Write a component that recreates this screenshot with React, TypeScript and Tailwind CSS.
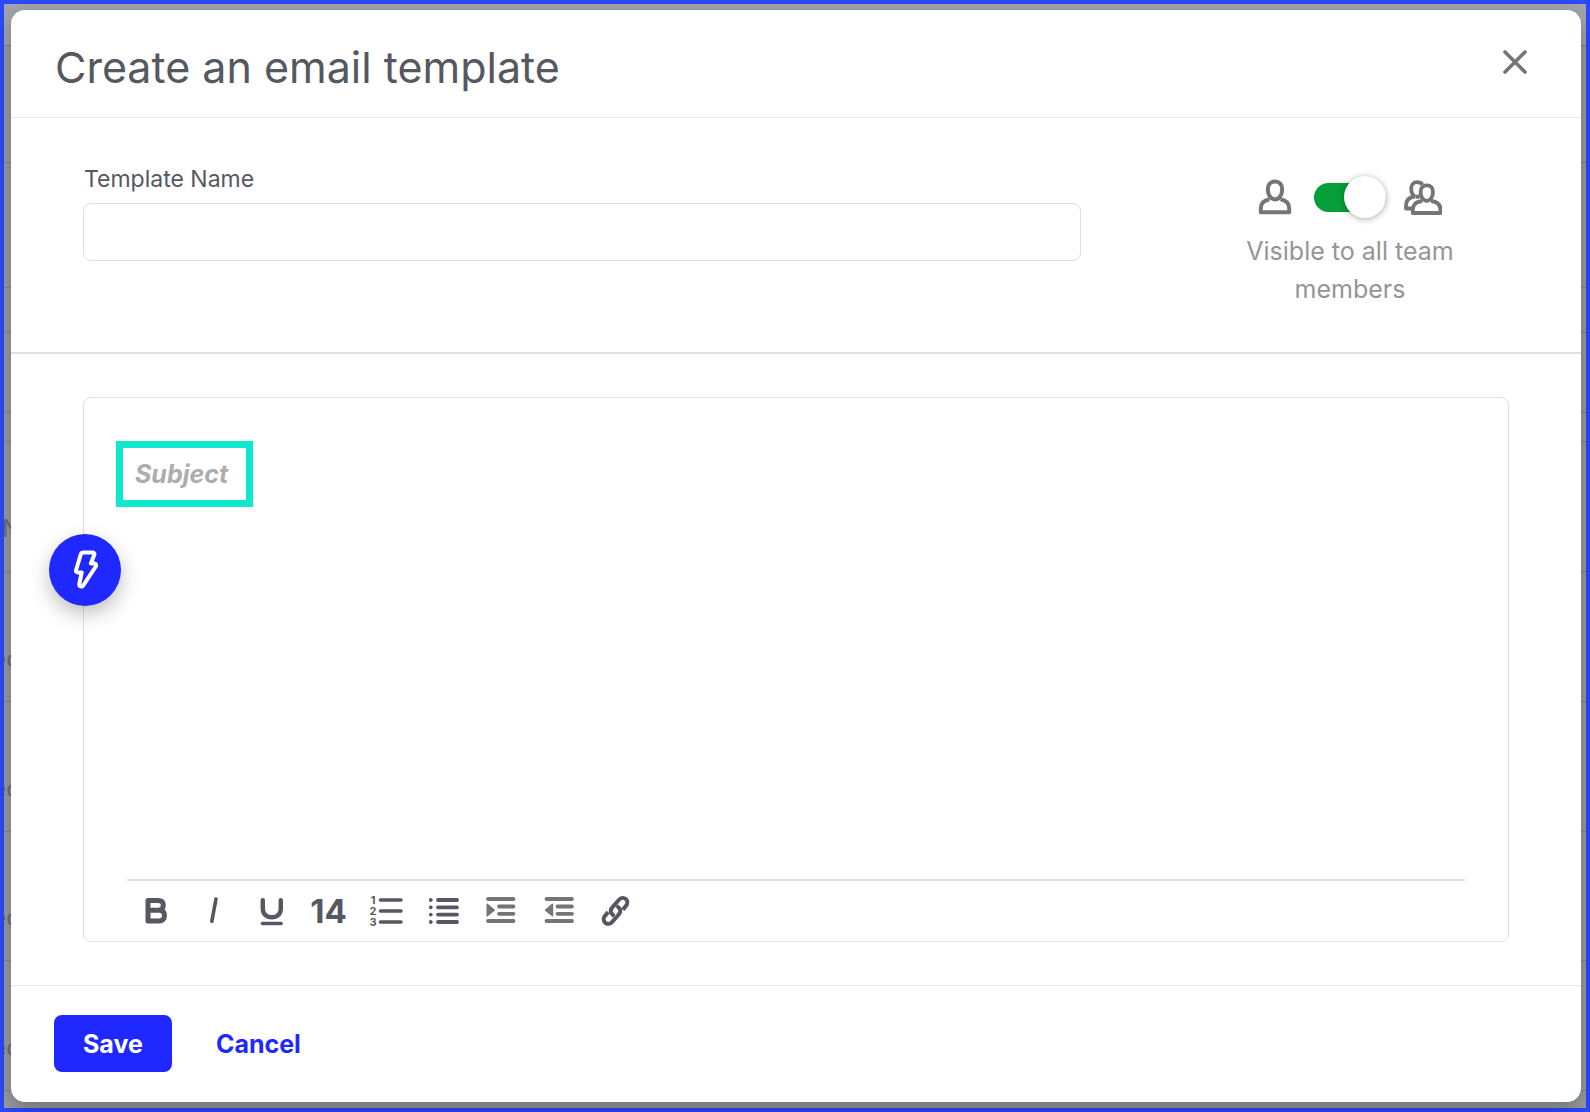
import { useState, type ReactNode } from "react";

const backgroundRows = [
  { height: "h-[42px]", text: "", tint: "bg-[#a3a7ad]" },
  { height: "h-[117px]", text: "", tint: "" },
  { height: "h-[125px]", text: "", tint: "" },
  { height: "h-[45px]", text: "", tint: "" },
  { height: "h-[80px]", text: "", tint: "" },
  { height: "h-[29px]", text: "", tint: "" },
  { height: "h-[130px]", text: "N", tint: "" },
  { height: "h-[130px]", text: "ec", tint: "" },
  { height: "h-[130px]", text: "ec", tint: "" },
  { height: "h-[129px]", text: "ec", tint: "" },
  { height: "h-[130px]", text: "ec", tint: "" },
];

function PageBehind() {
  return (
    <div aria-hidden="true" className="absolute inset-0 overflow-hidden bg-[#9b9fa2]">
      {backgroundRows.map((row, i) => (
        <div
          key={i}
          className={`flex items-end border-b border-[#85888b] ${row.height} ${row.tint}`}
        >
          <span className="mb-[26px] flex w-4 justify-end text-2xl text-[#6c6f72]">
            {row.text}
          </span>
        </div>
      ))}
    </div>
  );
}

function UserIcon() {
  return (
    <svg width="34" height="36" viewBox="0 0 34 36" fill="none" stroke="#757575" strokeWidth="4" strokeLinejoin="round">
      <path d="M17 2.600c-4.500 0-7.200 3-7.200 7.600 0 5.600 3 10.200 7.200 10.200s7.200-4.600 7.200-10.200c0-4.600-2.700-7.600-7.200-7.600z" />
      <path d="M11.500 20.300C6 21.300 2.800 24.500 2.800 29.500v3.800h28.400v-3.800c0-5-3.200-8.200-8.700-9.200" />
    </svg>
  );
}

function TeamIcon() {
  return (
    <svg width="38" height="36" viewBox="0 0 38 36" fill="none" stroke="#757575" strokeWidth="3.800" strokeLinejoin="round">
      <path d="M18.500 5.500C17.300 3.900 15.500 3.200 13.200 3.200c-3.800 0-6 2.500-6 6.300 0 3.600 1.500 6.800 4 8.300" />
      <path d="M10.500 17.500C5 18.300 2 21.500 2 26.500v3h6.500" />
      <path d="M11.500 17.900c1.500 0 2.900-.3 4.300-.8" />
      <path d="M22.800 6.400c-3.900 0-6.200 2.500-6.200 6.500 0 5 2.600 8.900 6.200 8.900s6.200-3.900 6.200-8.900c0-4-2.300-6.500-6.200-6.500z" />
      <path d="M18.300 22C12 22.600 8.800 25.800 8.800 30.800v3.200h27.600v-3.200c0-5-3-8.200-9.300-8.800" />
    </svg>
  );
}

function BoltIcon() {
  return (
    <svg width="24" height="40" viewBox="0 0 24 40" fill="none" stroke="white" strokeWidth="4" strokeLinejoin="round">
      <path d="M9.300 2.500h9.200c1.500 0 2.200 1 1.800 2.300L16.900 13.500h3.300c1.800 0 2.500 1.500 1.600 3L9.300 35.300c-1.500 2.200-4.300 1.300-4-1.300L7.700 22.500H4c-1.600 0-2.300-1-1.900-2.500L6.800 4.300c.4-1.200 1.200-1.800 2.500-1.800z" />
    </svg>
  );
}

// All toolbar drawings share a 32px box with a 16,16 centre
function ToolIcon({ color = "#555860", children }: { color?: string; children: ReactNode }) {
  return (
    <svg width="32" height="32" viewBox="0 0 32 32" fill="none" stroke={color} strokeWidth="3.600" strokeLinecap="round" strokeLinejoin="round">
      {children}
    </svg>
  );
}

const tools = [
  {
    label: "Bold",
    icon: (
      <ToolIcon>
        <path strokeWidth="5" d="M8 5.500h10c3.400 0 5.300 1.700 5.300 4.800s-1.900 5-5.300 5H8zM8 15.300h11c3.600 0 5.500 2 5.500 5.300s-1.900 5.400-5.500 5.400H8z" />
      </ToolIcon>
    ),
  },
  {
    label: "Italic",
    icon: (
      <ToolIcon>
        <path d="M19 4 14.800 26.300" />
      </ToolIcon>
    ),
  },
  {
    label: "Underline",
    icon: (
      <ToolIcon>
        <path strokeWidth="4.400" d="M7.800 5.300v8.200c0 5.500 3.500 8.800 9 8.800s9-3.300 9-8.800V5.300" />
        <path d="M7.500 28.500h18.600" />
      </ToolIcon>
    ),
  },
  {
    label: "Font size",
    icon: <span className="text-[33px] leading-8 font-bold">14</span>,
  },
  {
    label: "Numbered list",
    icon: (
      <span className="flex items-center">
        <span className="flex w-2 flex-col text-[11px] leading-[11px] font-bold">
          <span>1</span>
          <span>2</span>
          <span>3</span>
        </span>
        <svg width="26" height="32" viewBox="0 0 26 32" fill="none" stroke="#555860" strokeWidth="3.600" strokeLinecap="round">
          <path d="M3.500 5H24M3.500 16H24M3.500 27H24" />
        </svg>
      </span>
    ),
  },
  {
    label: "Bulleted list",
    icon: (
      <ToolIcon>
        <path strokeWidth="3.800" d="M10 5h19M10 12.300h19M10 19.600h19M10 27h19M2.800 5h.01M2.800 12.300h.01M2.800 19.600h.01M2.800 27h.01" />
      </ToolIcon>
    ),
  },
  {
    label: "Increase indent",
    icon: (
      <ToolIcon color="#757575">
        <path strokeWidth="3.800" d="M3 4h25.500M14 11.500h14.500M14 18.800h14.500M3 26h25.500" />
        <path d="M1.500 9.300v11.400c0 .8.700 1 1.200.6l6.900-5.600c.5-.4.5-.9 0-1.300L2.700 8.700c-.5-.4-1.200-.2-1.200.6z" fill="#757575" stroke="none" />
      </ToolIcon>
    ),
  },
  {
    label: "Decrease indent",
    icon: (
      <ToolIcon color="#757575">
        <path strokeWidth="3.800" d="M3.500 4H29M14.500 11.500H29M14.500 18.800H29M3.500 26H29" />
        <path d="M10.200 9.300v11.400c0 .8-.7 1-1.200.6l-6.900-5.600c-.5-.4-.5-.9 0-1.300L9 8.700c.5-.4 1.200-.2 1.200.6z" fill="#757575" stroke="none" />
      </ToolIcon>
    ),
  },
  {
    label: "Insert link",
    icon: (
      <ToolIcon>
        <path strokeWidth="4" strokeLinecap="butt" d="M14.500 20.800C10.500 19 9.600 15.300 12.300 12.300l6.700-7.600c2-2.200 4.900-2.300 6.800-.6s2 4.700.2 6.800L22.800 14.700" />
        <path strokeWidth="4" strokeLinecap="butt" d="M16.500 11C20.500 12.800 21.400 16.500 18.700 19.500l-6.700 7.600c-2 2.200-4.900 2.300-6.800.6s-2-4.700-.2-6.800L8.200 17.100" />
      </ToolIcon>
    ),
  },
];

export default function App() {
  const [name, setName] = useState("");
  const [subject, setSubject] = useState("");
  const [body, setBody] = useState("");
  const [shared, setShared] = useState(true);

  return (
    <div className="relative flex min-h-screen flex-col border-4 border-[#2b4bff] pt-[6px] pr-[5px] pb-[6px] pl-[7px] font-[Inter,'Liberation_Sans',sans-serif] text-[#555860]">
      <PageBehind />

      <div
        role="dialog"
        aria-labelledby="dialog-title"
        className="relative flex flex-1 flex-col rounded-[14px] bg-white shadow-[0_8px_24px_rgba(0,0,0,0.3)]"
      >
        <header className="flex h-[108px] items-center justify-between border-b border-[#e6e7e8] pr-[46px] pl-11">
          <h1 id="dialog-title" className="pt-[6px] text-[43px] leading-[56px]">
            Create an email template
          </h1>
          <button type="button" aria-label="Close" className="mb-1 p-1">
            <svg width="32" height="32" viewBox="0 0 32 32" stroke="#757575" strokeWidth="3.600" strokeLinecap="round">
              <path d="M6 6 26 26M26 6 6 26" />
            </svg>
          </button>
        </header>

        <section className="flex h-[236px] justify-between border-b-2 border-[#dedfe0] px-[72px] pt-[45px]">
          <div className="flex w-[70%] flex-col gap-2">
            <label htmlFor="template-name" className="px-px text-[23px] leading-8">
              Template Name
            </label>
            <input
              id="template-name"
              value={name}
              onChange={(e) => setName(e.target.value)}
              className="h-[58px] rounded-lg border border-[#dedfe0] px-4 text-2xl"
            />
          </div>

          <div className="flex w-[318px] flex-col items-center pt-3">
            <div className="flex h-11 items-center">
              <UserIcon />
              <input
                id="visibility"
                type="checkbox"
                role="switch"
                checked={shared}
                onChange={(e) => setShared(e.target.checked)}
                className="mr-[18px] ml-[22px] flex h-[29px] w-[72px] appearance-none items-center rounded-full bg-[#b5b7ba] before:size-[42px] before:shrink-0 before:rounded-full before:bg-white before:shadow-[0_1px_6px_rgba(0,0,0,0.35)] checked:justify-end checked:bg-[#049f38]"
              />
              <TeamIcon />
            </div>
            <label
              htmlFor="visibility"
              className="mt-[13px] w-60 text-center text-[25px] leading-[38px] text-[#959595]"
            >
              Visible to all team members
            </label>
          </div>
        </section>

        <section className="flex flex-1 flex-col px-[72px] py-[43px]">
          <div className="relative flex flex-1 flex-col rounded-lg border border-[#dedfe0] pt-[43px]">
            <div className="ml-8 flex h-[66px] w-[137px] items-center border-[7px] border-[#0ee8cd] px-3 pt-px">
              <input
                aria-label="Subject"
                placeholder="Subject"
                value={subject}
                onChange={(e) => setSubject(e.target.value)}
                className="w-full text-[25px] font-bold italic outline-none placeholder:text-[#adadad]"
              />
            </div>
            <textarea
              aria-label="Message"
              value={body}
              onChange={(e) => setBody(e.target.value)}
              className="mx-[43px] mt-4 min-h-40 flex-1 resize-none text-2xl outline-none"
            />

            <div className="mx-[43px] flex h-[62px] border-t-2 border-[#dedfe0]">
              <div role="toolbar" aria-label="Formatting" className="flex w-[518px]">
                {tools.map((tool) => (
                  <button
                    key={tool.label}
                    type="button"
                    aria-label={tool.label}
                    className="flex flex-1 items-center justify-center"
                  >
                    {tool.icon}
                  </button>
                ))}
              </div>
            </div>

            <button
              type="button"
              aria-label="Insert shortcut"
              className="absolute top-[136px] -left-[35px] flex size-[72px] items-center justify-center rounded-full bg-[#1f28ff] pb-px pl-px shadow-[0_8px_20px_rgba(0,0,0,0.25)]"
            >
              <BoltIcon />
            </button>
          </div>
        </section>

        <footer className="flex items-center gap-11 border-t border-[#e6e7e8] pt-[29px] pb-[30px] pl-[43px] text-[25px] font-bold">
          <button type="button" className="h-[57px] rounded-lg bg-[#1f28ff] px-[29px] pt-[2px] text-white">
            Save
          </button>
          <button type="button" className="pt-[2px] text-[#1f28ff]">
            Cancel
          </button>
        </footer>
      </div>
    </div>
  );
}
